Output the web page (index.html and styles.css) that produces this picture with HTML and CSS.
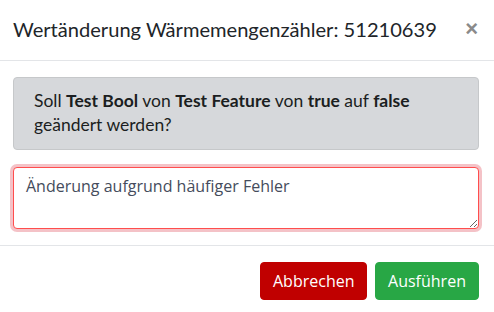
FILE: index.html
```html
<!DOCTYPE html>
<html lang="de">
<head>
<meta charset="utf-8">
<link rel="stylesheet" href="styles.css">
</head>
<body>
<div class="modal">
  <div class="modal-header">
    <h5 class="modal-title">Wertänderung Wärmemengenzähler: 51210639</h5>
    <button class="close" type="button">×</button>
  </div>
  <div class="modal-body">
    <div class="alert">Soll <b>Test Bool</b> von <b>Test Feature</b> von <b>true</b> auf <b>false</b> geändert werden?</div>
    <textarea class="reason">Änderung aufgrund häufiger Fehler</textarea>
  </div>
  <div class="modal-footer">
    <button class="btn btn-cancel" type="button">Abbrechen</button>
    <button class="btn btn-run" type="button">Ausführen</button>
  </div>
</div>
</body>
</html>
```
FILE: styles.css
```css
* { box-sizing: border-box; }
html, body { margin: 0; padding: 0; background: #fff; }
body { width: 494px; height: 312px; overflow: hidden; font-family: Lato, "Open Sans", sans-serif; color: #212529; }
.modal { display: flex; flex-direction: column; }
.modal-header {
  display: flex; align-items: center; justify-content: space-between;
  height: 61px; padding: 0 15px 0 13px;
  border-bottom: 1px solid #e3e5e8;
}
.modal-title { margin: 0; font-size: 20.1px; font-weight: 400; color: #212529; line-height: 24px; padding-bottom: 2px; }
.close {
  border: 0; background: none; padding: 0; margin: 0 1px 3px 0;
  font-family: "Liberation Sans", Arial, sans-serif; font-size: 22px; font-weight: 700;
  color: #8a8a8a; line-height: 1; cursor: pointer;
}
.modal-body { padding: 16px 15px 16px 13px; display: flex; flex-direction: column; gap: 17px; border-bottom: 1px solid #e3e5e8; }
.alert {
  background: #d6d8db; border: 1px solid #c6c8ca; border-radius: 4px;
  padding: 11px 20px 12px 20px; font-size: 17.5px; line-height: 24px; color: #1b1e21;
}
.alert b { font-weight: 700; }
.reason {
  display: block; width: 100%; height: 62px; margin: 0; resize: vertical;
  font-family: "Open Sans", sans-serif; font-size: 16px; line-height: 24px; color: #454c5c;
  border: 1px solid #ff4d4d; border-radius: 4px; padding: 6px 12px;
  box-shadow: 0 0 0 3px rgba(220, 53, 69, 0.3); outline: none;
}
.modal-footer { display: flex; justify-content: flex-end; gap: 8px; padding: 16px 15px 12px 13px; }
.btn {
  height: 38px; border: 1px solid transparent; border-radius: 4px; padding: 0 12px;
  font-family: "Open Sans", sans-serif; font-size: 16px; color: #fff; cursor: pointer;
}
.btn-cancel { background: #c00000; border-color: #c00000; width: 107px; }
.btn-run { background: #28a745; border-color: #28a745; width: 104px; }
```
